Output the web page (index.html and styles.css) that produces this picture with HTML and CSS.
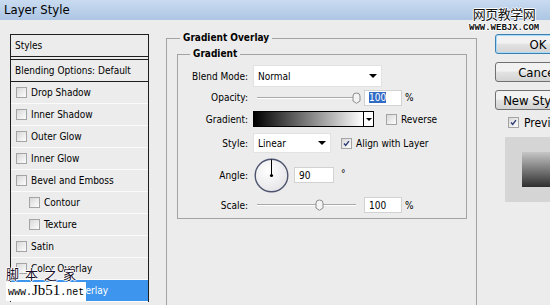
FILE: index.html
```html
<!DOCTYPE html>
<html lang="en">
<head>
    <meta charset="UTF-8">
    <title>Layer Style</title>
    <link rel="stylesheet" href="styles.css">
</head>
<body>
    <!-- Title bar -->
    <div class="titlebar">Layer Style</div>

    <div class="dialog">
        <!-- Left: list of effects -->
        <ul class="styles-list">
            <li class="head">Styles</li>
            <li class="blend">Blending Options: Default</li>
            <li><span class="box"></span>Drop Shadow</li>
            <li><span class="box"></span>Inner Shadow</li>
            <li><span class="box"></span>Outer Glow</li>
            <li><span class="box"></span>Inner Glow</li>
            <li><span class="box"></span>Bevel and Emboss</li>
            <li class="sub"><span class="box"></span>Contour</li>
            <li class="sub"><span class="box"></span>Texture</li>
            <li><span class="box"></span>Satin</li>
            <li><span class="box"></span>Color Overlay</li>
            <li class="selected"><span class="box"><svg viewBox="0 0 11 11"><path d="M2.5 5.5 L4.5 7.8 L8.5 2.6"/></svg></span>Gradient Overlay</li>
        </ul>

        <!-- Middle: settings -->
        <fieldset class="group outer">
            <legend>Gradient Overlay</legend>
            <fieldset class="group inner">
                <legend>Gradient</legend>
                <div class="rows">
                    <div class="row">
                        <span class="label">Blend Mode:</span>
                        <div class="select blend-mode">Normal<span class="arrow"></span></div>
                    </div>
                    <div class="row row-short">
                        <span class="label">Opacity:</span>
                        <div class="slider"><div class="track"><svg class="thumb" style="left: 100%" viewBox="0 0 9 12"><path d="M1 4 Q1 1 4.5 1 Q8 1 8 4 L8 9 L4.5 11.3 L1 9 Z"/></svg></div></div>
                        <div class="field"><span class="sel">100</span></div>
                        <span class="unit">%</span>
                    </div>
                    <div class="row">
                        <span class="label">Gradient:</span>
                        <div class="gradient">
                            <div class="gradient-fill"></div>
                            <div class="gradient-drop"><span class="mini-arrow"></span></div>
                        </div>
                        <div class="check reverse"><span class="box"></span>Reverse</div>
                    </div>
                    <div class="row">
                        <span class="label">Style:</span>
                        <div class="select style-type">Linear<span class="arrow"></span></div>
                        <div class="check align"><span class="box"><svg viewBox="0 0 11 11"><path d="M2.5 5.5 L4.5 7.8 L8.5 2.6"/></svg></span>Align with Layer</div>
                    </div>
                    <div class="row row-angle">
                        <span class="label">Angle:</span>
                        <svg class="dial" viewBox="0 0 35 35">
                            <defs>
                                <radialGradient id="dialFill" cx="40%" cy="35%" r="70%">
                                    <stop offset="0" stop-color="#ffffff"/>
                                    <stop offset="1" stop-color="#e4e4e8"/>
                                </radialGradient>
                            </defs>
                            <circle cx="17.5" cy="17.5" r="16.3" fill="url(#dialFill)" stroke="#4e546f" stroke-width="1.4"/>
                            <line x1="17.5" y1="17.5" x2="17.5" y2="1.5" stroke="#000" stroke-width="1"/>
                            <circle cx="17.5" cy="17.5" r="1.6" fill="#000"/>
                        </svg>
                        <div class="field angle">90</div>
                        <span class="degree">°</span>
                    </div>
                    <div class="row row-scale">
                        <span class="label">Scale:</span>
                        <div class="slider"><div class="track"><svg class="thumb" style="left: 63%" viewBox="0 0 9 12"><path d="M1 4 Q1 1 4.5 1 Q8 1 8 4 L8 9 L4.5 11.3 L1 9 Z"/></svg></div></div>
                        <div class="field">100</div>
                        <span class="unit">%</span>
                    </div>
                </div>
            </fieldset>
        </fieldset>

        <!-- Right: buttons and preview -->
        <div class="side">
            <button class="btn default">OK</button>
            <button class="btn">Cancel</button>
            <button class="btn">New Style...</button>
            <div class="preview-check"><span class="box"><svg viewBox="0 0 11 11"><path d="M2.5 5.5 L4.5 7.8 L8.5 2.6"/></svg></span>Preview</div>
            <div class="preview"><div class="swatch"></div></div>
        </div>
    </div>

    <!-- Watermarks -->
    <div class="mark-top">
        <div class="mark-cn">网页教学网</div>
        <div class="mark-url">WWW.WEBJX.COM</div>
    </div>
    <div class="mark-bottom">
        <div class="mark-cn2">脚本之家</div>
        <div class="mark-url2">www.<b>Jb51</b>.net</div>
    </div>
</body>
</html>
```

FILE: styles.css
```css
body {
    margin: 0;
    width: 550px;
    height: 305px;
    overflow: hidden;
    position: relative;
    background: #ececec;
    color: #000;
    font-family: Tahoma, "DejaVu Sans Condensed", "DejaVu Sans", sans-serif;
    font-size: 10px;
}

.titlebar {
    height: 20px;
    padding-left: 4px;
    line-height: 20px;
    font-size: 13px;
    background: linear-gradient(#c9dbf0, #adc6e4);
}

.dialog {
    display: flex;
    align-items: flex-start;
}

/* left list */
.styles-list {
    flex: none;
    width: 139px;
    box-sizing: border-box;
    margin: 14px 0 0 10px;
    padding: 0;
    list-style: none;
    border: 1px solid #1e1e1e;
    border-bottom: 0;
}

.styles-list li {
    height: 21px;
    display: flex;
    align-items: center;
    padding-left: 5px;
    border-bottom: 1px solid #fbfbfb;
    white-space: nowrap;
}

.styles-list .head {
    padding-left: 4px;
    border-bottom-color: #1e1e1e;
}

.styles-list .blend {
    margin-top: 2px;
    padding-left: 4px;
    border-top: 1px solid #1e1e1e;
    border-bottom-color: #1e1e1e;
}

.styles-list .sub {
    padding-left: 18px;
}

.styles-list .selected {
    background: #3d95ed;
    color: #fff;
}

.box {
    flex: none;
    width: 11px;
    height: 11px;
    box-sizing: border-box;
    margin-right: 4px;
    border: 1px solid #a4a4a4;
    background: linear-gradient(135deg, #d8d8d8, #fdfdfd);
    display: flex;
}

.box svg {
    width: 9px;
    height: 9px;
}

.box path {
    fill: none;
    stroke: #2d3c78;
    stroke-width: 1.7;
}

/* middle groups */
.group {
    margin: 0;
    border: 1px solid #a3a3a3;
    min-width: 0;
}

.group legend {
    padding: 0 3px;
    line-height: 14px;
    font-weight: bold;
}

.outer {
    flex: none;
    width: 311px;
    height: 300px;
    box-sizing: border-box;
    margin: 11px 0 0 17px;
    padding: 2px 9px 0 10px;
    border-bottom: 0;
}

.outer > legend {
    margin-left: 3px;
}

.inner {
    width: 290px;
    box-sizing: border-box;
    padding: 4px 0 4px 0;
}

.inner > legend {
    margin-left: 12px;
}

.rows {
    display: flex;
    flex-direction: column;
    gap: 2px;
}

.row {
    display: flex;
    align-items: center;
    height: 22px;
}

.row-short {
    height: 17px;
}

.row-angle {
    height: 38px;
}

.row-scale {
    height: 18px;
}

.label {
    flex: none;
    width: 70px;
    margin-right: 5px;
    text-align: right;
}

.select {
    display: flex;
    align-items: center;
    box-sizing: border-box;
    padding-left: 4px;
    background: #fff;
    border: 1px solid #e2e2e2;
}

.blend-mode {
    width: 129px;
    height: 22px;
}

.style-type {
    width: 78px;
    height: 20px;
}

.arrow {
    margin-left: auto;
    margin-right: 4px;
    border-left: 4px solid transparent;
    border-right: 4px solid transparent;
    border-top: 4px solid #000;
}

.slider {
    position: relative;
    width: 107px;
    height: 14px;
}

.slider::before {
    content: "";
    position: absolute;
    left: 4px;
    right: 4px;
    top: 6px;
    border-top: 1px solid #a9a9a9;
    border-bottom: 1px solid #fff;
}

.track {
    position: absolute;
    left: 4px;
    right: 4px;
    top: 0;
    bottom: 0;
}

.thumb {
    position: absolute;
    top: 1px;
    width: 9px;
    height: 12px;
    margin-left: -4.5px;
}

.thumb path {
    fill: #f4f4f4;
    stroke: #8c8c8c;
    stroke-width: 1;
}

.field {
    display: flex;
    align-items: center;
    width: 38px;
    height: 16px;
    box-sizing: border-box;
    margin-left: 4px;
    padding-left: 4px;
    background: #fff;
    border: 1px solid #d2d2d2;
}

.sel {
    background: #316ac5;
    color: #fff;
}

.unit {
    margin-left: 3px;
}

.gradient {
    display: flex;
    width: 121px;
    height: 16px;
    box-sizing: border-box;
    border: 1px solid #000;
}

.gradient-fill {
    flex: 1;
    background: linear-gradient(to right, #000, #fff);
}

.gradient-drop {
    width: 9px;
    display: flex;
    align-items: center;
    justify-content: center;
    border-left: 1px solid #000;
    background: #fff;
}

.mini-arrow {
    border-left: 3px solid transparent;
    border-right: 3px solid transparent;
    border-top: 3px solid #000;
}

.check {
    display: flex;
    align-items: center;
}

.reverse {
    margin-left: 12px;
}

.align {
    margin-left: 10px;
}

.dial {
    width: 35px;
    height: 35px;
    margin-left: 1px;
}

.angle {
    width: 40px;
    margin-left: 5px;
}

.degree {
    margin-left: 7px;
    margin-bottom: 4px;
}

/* right side */
.side {
    flex: none;
    width: 86px;
    margin: 14px 0 0 18px;
    display: flex;
    flex-direction: column;
    align-items: flex-start;
}

.btn {
    width: 86px;
    height: 20px;
    padding: 0;
    box-sizing: border-box;
    font-family: Tahoma, "DejaVu Sans Condensed", "DejaVu Sans", sans-serif;
    font-size: 13px;
    color: #000;
    border: 1px solid #707070;
    border-radius: 3px;
    background: linear-gradient(#f2f2f2 45%, #e3e3e3 50%, #d3d3d3);
}

.btn + .btn {
    margin-top: 8px;
}

.btn.default {
    border-color: #3c7fb1;
    box-shadow: inset 0 0 0 1px #a6dcf7;
}

.preview-check {
    display: flex;
    align-items: center;
    height: 15px;
    margin: 5px 0 0 13px;
    font-size: 12px;
}

.preview-check .box {
    margin-right: 5px;
}

.preview {
    width: 70px;
    height: 65px;
    box-sizing: border-box;
    margin: 7px 0 0 10px;
    padding: 15px 0 0 17px;
    background: #d5d5d5;
}

.swatch {
    width: 40px;
    height: 35px;
    background: linear-gradient(#c6c6c6, #2e2e2e);
}

/* watermarks laid over the screenshot */
.mark-top {
    position: absolute;
    top: 6px;
    left: 469px;
    text-align: center;
    color: #111;
    text-shadow: 1px 0 0 #fff, -1px 0 0 #fff, 0 1px 0 #fff, 0 -1px 0 #fff;
}

.mark-cn {
    font-family: "Noto Sans CJK SC", sans-serif;
    font-size: 13px;
    line-height: 16px;
    letter-spacing: -0.5px;
}

.mark-url {
    margin-top: 2px;
    font-family: "Liberation Mono", monospace;
    font-size: 9px;
    font-weight: bold;
    line-height: 8px;
}

.mark-bottom {
    position: absolute;
    left: 6px;
    top: 265px;
}

.mark-cn2 {
    font-family: "Noto Sans CJK SC", sans-serif;
    font-size: 13px;
    line-height: 17px;
    letter-spacing: 6px;
    color: #1a0f2a;
    text-shadow: 1px 0 0 #fff, -1px 0 0 #fff, 0 1px 0 #fff, 0 -1px 0 #fff;
}

.mark-url2 {
    display: inline-block;
    padding: 0 2px;
    background: #fff;
    font-family: "Liberation Mono", monospace;
    font-size: 10px;
    line-height: 16px;
    color: #000;
}

.mark-url2 b {
    font-family: "Liberation Serif", serif;
    font-size: 15px;
    font-weight: normal;
}
```
